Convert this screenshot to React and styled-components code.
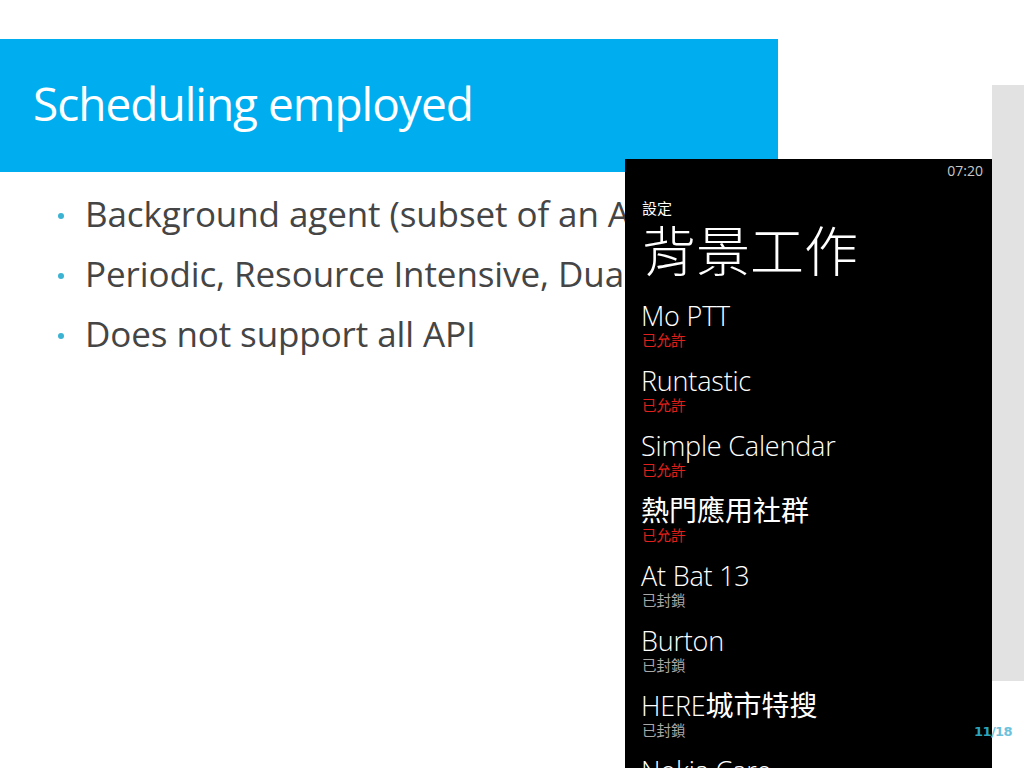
import React from "react";
import styled, { createGlobalStyle } from "styled-components";

const Global = createGlobalStyle`
  html, body { margin: 0; padding: 0; background: #ffffff; }
  body { width: 1024px; height: 768px; overflow: hidden; }
`;

const Slide = styled.div`
  position: relative;
  width: 1024px;
  height: 768px;
  overflow: hidden;
  background: #ffffff;
  font-family: "Open Sans", "Noto Sans", sans-serif;
  padding-top: 39px;
  box-sizing: border-box;
`;

const TitleBar = styled.header`
  width: 778px;
  height: 133px;
  background: #00aeef;
  display: flex;
  align-items: center;
  padding-left: 33px;
  box-sizing: border-box;
`;

const Title = styled.h1`
  margin: 0 0 6px 0;
  font-weight: 400;
  font-size: 46px;
  letter-spacing: -1px;
  color: #ffffff;
`;

const Bullets = styled.ul`
  list-style: none;
  margin: 0;
  padding: 11px 0 0 58px;
  display: flex;
  flex-direction: column;
`;

const Bullet = styled.li`
  display: flex;
  align-items: center;
  height: 60px;
  font-size: 35px;
  letter-spacing: -0.1px;
  color: #454545;
  white-space: nowrap;
  &::before {
    content: "";
    width: 6px;
    height: 6px;
    border-radius: 50%;
    background: #3bb3d3;
    margin-right: 21px;
    margin-top: 6px;
    flex: none;
  }
`;

const SidePanel = styled.div`
  position: absolute;
  left: 992px;
  top: 85px;
  width: 32px;
  height: 596px;
  background: #e2e2e2;
`;

const Phone = styled.div`
  position: absolute;
  left: 625px;
  top: 159px;
  width: 367px;
  height: 609px;
  background: #000000;
  overflow: hidden;
  font-family: "Open Sans", "Noto Sans CJK TC", sans-serif;
  display: flex;
  flex-direction: column;
  padding: 0 0 0 17px;
  box-sizing: border-box;
`;

const StatusBar = styled.div`
  display: flex;
  justify-content: flex-end;
  padding: 2px 9px 0 0;
  height: 24px;
  font-size: 14px;
  color: #c8c8c8;
`;

const Section = styled.div`
  font-size: 15px;
  color: #ffffff;
  line-height: 18px;
  margin-top: 19px;
`;

const PageTitle = styled.div`
  font-size: 54px;
  line-height: 60px;
  color: #ffffff;
  font-family: "Noto Sans CJK TC", sans-serif;
  font-weight: 300;
  margin-top: 2px;
`;

const AppList = styled.div`
  display: flex;
  flex-direction: column;
  margin-top: 20px;
`;

const AppItem = styled.div`
  display: flex;
  flex-direction: column;
  height: 65px;
`;

const AppName = styled.div`
  height: 34px;
  font-size: 27px;
  line-height: 34px;
  font-weight: 300;
  color: #ffffff;
  letter-spacing: -0.2px;
  font-family: "Open Sans", "Noto Sans CJK TC", sans-serif;
  margin-left: -1px;
  white-space: nowrap;
`;

const Han = styled.span`
  font-family: "Noto Sans CJK TC", sans-serif;
  font-weight: 400;
  font-size: 28px;
  line-height: 1;
  letter-spacing: 0;
`;

const AppStatus = styled.div`
  font-size: 14.5px;
  line-height: 17px;
  margin-top: -2px;
  font-family: "Noto Sans CJK TC", sans-serif;
  color: ${(p) => (p.$allowed ? "#e3201b" : "#a8a8a8")};
`;

const PageNum = styled.div`
  position: absolute;
  left: 974px;
  top: 724px;
  font-family: "DejaVu Sans", sans-serif;
  font-weight: 700;
  font-size: 13px;
  letter-spacing: -0.6px;
  color: #2ba3bd;
  span { color: #6ac2dc; }
`;

const apps = [
  { name: "Mo PTT", allowed: true },
  { name: "Runtastic", allowed: true },
  { name: "Simple Calendar", allowed: true },
  { han: "熱門應用社群", allowed: true },
  { name: "At Bat 13", allowed: false },
  { name: "Burton", allowed: false },
  { name: "HERE", han: "城市特搜", allowed: false },
  { name: "Nokia Care", allowed: false },
];

export default function App() {
  return (
    <>
      <Global />
      <Slide>
        <TitleBar>
          <Title>Scheduling employed</Title>
        </TitleBar>
        <Bullets>
          <Bullet>Background agent (subset of an App)</Bullet>
          <Bullet>Periodic, Resource Intensive, Dual</Bullet>
          <Bullet>Does not support all API</Bullet>
        </Bullets>
        <SidePanel />
        <Phone>
          <StatusBar>07:20</StatusBar>
          <Section>設定</Section>
          <PageTitle>背景工作</PageTitle>
          <AppList>
            {apps.map((a) => (
              <AppItem key={(a.name || "") + (a.han || "")}>
                <AppName>
                  {a.name}
                  {a.han && <Han>{a.han}</Han>}
                </AppName>
                <AppStatus $allowed={a.allowed}>{a.allowed ? "已允許" : "已封鎖"}</AppStatus>
              </AppItem>
            ))}
          </AppList>
        </Phone>
        <PageNum>
          11<span>/18</span>
        </PageNum>
      </Slide>
    </>
  );
}
